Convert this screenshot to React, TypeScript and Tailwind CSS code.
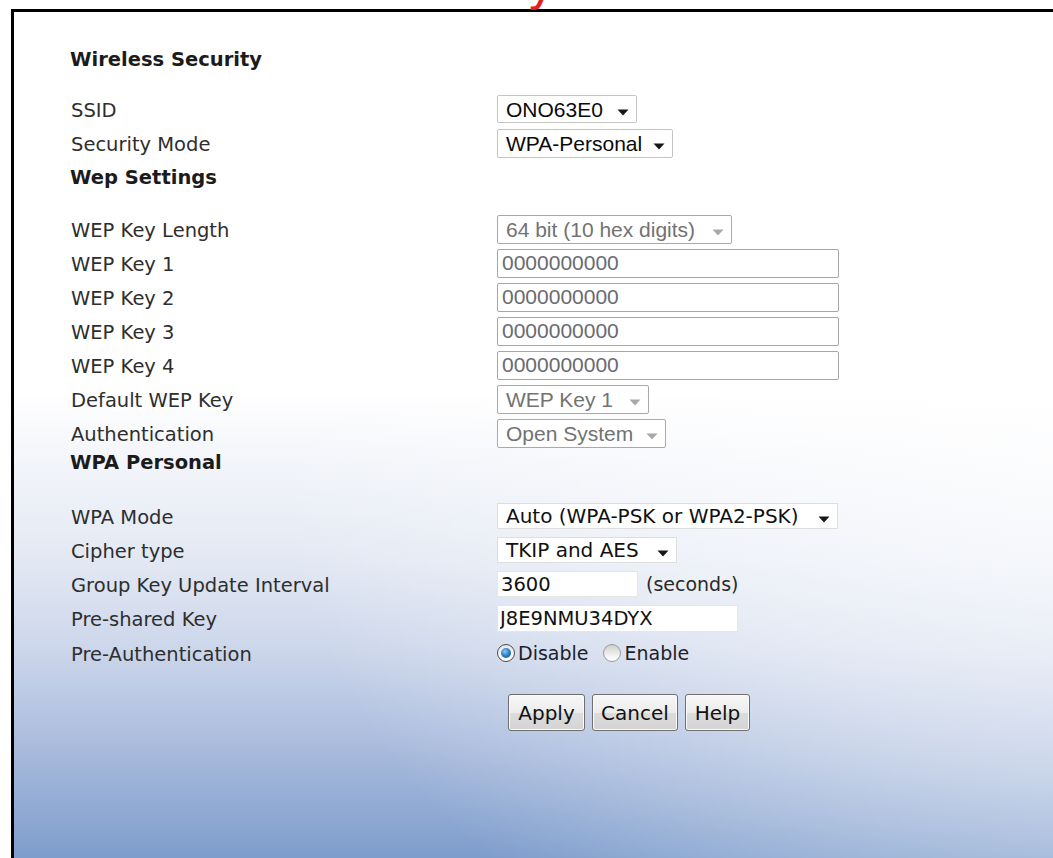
import React from "react";

type Child = { children?: React.ReactNode };

// Small drop-down caret used by the select boxes
function Caret({ muted }: { muted?: boolean }) {
  return (
    <svg width="12" height="7" viewBox="0 0 12 7" className="mt-[7px] shrink-0">
      <path d="M0.5 0.5H11.5L6 6.5Z" fill={muted ? "#a8a8a8" : "#161616"} />
    </svg>
  );
}

function Heading({ children, className }: Child & { className: string }) {
  return (
    <div
      className={
        "flex items-center text-[19.5px] font-bold text-[#1b1b1b] font-['DejaVu_Sans',sans-serif] " +
        className
      }
    >
      {children}
    </div>
  );
}

function Row({ label, children, className = "h-[34px]" }: Child & { label: string; className?: string }) {
  return (
    <div className={"flex items-center " + className}>
      <div className="w-[426px] shrink-0 pt-[3px] text-[19.5px] text-[#2e2e2e] font-['DejaVu_Sans',sans-serif]">
        {label}
      </div>
      {children}
    </div>
  );
}

// Windows-style select box: fixed width, value text and caret
function Select({
  value,
  className,
  muted,
  tahoma,
}: {
  value: string;
  className: string;
  muted?: boolean;
  tahoma?: boolean;
}) {
  const tone = muted
    ? "border-[#a9a9a9] text-[#727272] bg-white rounded-[2px]"
    : tahoma
    ? "border-[#dedede] text-[#111111] bg-white"
    : "border-[#c4c4c4] text-[#0a0a0a] bg-white rounded-[2px]";
  const face = tahoma
    ? "text-[20px] font-['DejaVu_Sans',sans-serif]"
    : "text-[21px] font-['Liberation_Sans',Arial,sans-serif]";
  return (
    <div className={"flex items-center justify-between border pl-[8px] pr-[7px] " + tone + " " + className}>
      <span className={"whitespace-nowrap leading-none " + face}>{value}</span>
      <Caret muted={muted} />
    </div>
  );
}

function KeyField({ value }: { value: string }) {
  return (
    <input
      readOnly
      disabled
      value={value}
      className="h-[29px] w-[342px] rounded-[2px] border border-[#a6a6a6] bg-white px-[4px] text-[21px] leading-none text-[#6a6a72] font-['Liberation_Sans',Arial,sans-serif] outline-none"
    />
  );
}

function Radio({ checked }: { checked?: boolean }) {
  return checked ? (
    <span className="flex h-[18px] w-[18px] shrink-0 items-center justify-center rounded-full border border-[#4d4d4d] bg-[linear-gradient(180deg,#e6e6e6,#ffffff)]">
      <span className="h-[10px] w-[10px] rounded-full bg-[radial-gradient(circle_at_40%_35%,#8ccaf5_0%,#2f82c8_45%,#134f86_100%)]" />
    </span>
  ) : (
    <span className="block h-[18px] w-[18px] shrink-0 rounded-full border border-[#9b9b9b] bg-[linear-gradient(180deg,#cfcfcf,#f4f4f4_70%,#ffffff)]" />
  );
}

function Button({ children, className }: Child & { className: string }) {
  return (
    <button
      type="button"
      className={
        "flex h-[37px] items-center justify-center rounded-[3px] border border-[#6f6f6f] bg-[linear-gradient(180deg,#f7f7f7_0%,#ececec_50%,#dcdcdc_51%,#d4d4d4_100%)] text-[20px] text-[#111111] font-['DejaVu_Sans',sans-serif] shadow-[inset_0_0_0_1px_#fbfbfb] " +
        className
      }
    >
      {children}
    </button>
  );
}

export default function App() {
  return (
    <div className="relative h-[858px] w-[1053px] overflow-hidden bg-white">
      {/* tail of the page title sitting just above the frame */}
      <span className="absolute left-[527px] top-[-41px] text-[48px] leading-none text-[#e3201c] font-['DejaVu_Sans',sans-serif]">
        y
      </span>

      <div className="ml-[11px] mt-[9px] h-[849px] border-l-[3px] border-t-[3px] border-black bg-[radial-gradient(ellipse_900px_700px_at_110%_45%,rgba(255,255,255,0.85)_0%,rgba(255,255,255,0.45)_55%,rgba(255,255,255,0)_100%),linear-gradient(180deg,#ffffff_0%,#ffffff_45%,#f3f5fa_53%,#e2e8f3_65%,#cdd7eb_75%,#a9bbdd_87%,#7e9dcc_100%)]">
        <div className="pl-[56px] pt-[31px]">
          <Heading className="h-[34px]">Wireless Security</Heading>

          <div className="ml-px mt-[15px]">
            <Row label="SSID">
              <Select value="ONO63E0" className="h-[28px] w-[140px]" />
            </Row>
            <Row label="Security Mode">
              <Select value="WPA-Personal" className="h-[29px] w-[176px]" />
            </Row>
          </div>

          <Heading className="h-[36px]">Wep Settings</Heading>

          <div className="ml-px mt-[16px]">
            <Row label="WEP Key Length">
              <Select value="64 bit (10 hex digits)" muted className="h-[29px] w-[235px]" />
            </Row>
            <Row label="WEP Key 1">
              <KeyField value="0000000000" />
            </Row>
            <Row label="WEP Key 2">
              <KeyField value="0000000000" />
            </Row>
            <Row label="WEP Key 3">
              <KeyField value="0000000000" />
            </Row>
            <Row label="WEP Key 4">
              <KeyField value="0000000000" />
            </Row>
            <Row label="Default WEP Key">
              <Select value="WEP Key 1" muted className="h-[29px] w-[152px]" />
            </Row>
            <Row label="Authentication">
              <Select value="Open System" muted className="h-[29px] w-[169px]" />
            </Row>
          </div>

          <Heading className="h-[26px]">WPA Personal</Heading>

          <div className="ml-px mt-[23px]">
            <Row label="WPA Mode">
              <Select value="Auto (WPA-PSK or WPA2-PSK)" tahoma className="h-[26px] w-[341px]" />
            </Row>
            <Row label="Cipher type">
              <Select value="TKIP and AES" tahoma className="h-[26px] w-[180px]" />
            </Row>
            <Row label="Group Key Update Interval">
              <div className="flex items-center gap-[8px]">
                <input
                  readOnly
                  value="3600"
                  className="h-[26px] w-[141px] border border-[#e6e6e6] bg-white px-[3px] text-[19.5px] leading-none text-[#111111] font-['DejaVu_Sans',sans-serif] outline-none"
                />
                <span className="text-[19px] text-[#2a2a2a] font-['DejaVu_Sans',sans-serif]">(seconds)</span>
              </div>
            </Row>
            <Row label="Pre-shared Key">
              <input
                readOnly
                value="J8E9NMU34DYX"
                className="h-[27px] w-[241px] border border-[#e6e6e6] bg-white px-[2px] text-[19.5px] leading-none text-[#111111] font-['DejaVu_Sans',sans-serif] outline-none"
              />
            </Row>
            <Row label="Pre-Authentication" className="h-[36px]">
              <div className="flex items-center text-[19px] text-[#1e1e2a] font-['DejaVu_Sans',sans-serif]">
                <Radio checked />
                <span className="ml-[3px]">Disable</span>
                <span className="ml-[15px] flex items-center">
                  <Radio />
                </span>
                <span className="ml-[3px]">Enable</span>
              </div>
            </Row>
          </div>

          <div className="ml-[438px] mt-[23px] flex gap-[7px]">
            <Button className="w-[77px]">Apply</Button>
            <Button className="w-[86px]">Cancel</Button>
            <Button className="w-[65px]">Help</Button>
          </div>
        </div>
      </div>
    </div>
  );
}
